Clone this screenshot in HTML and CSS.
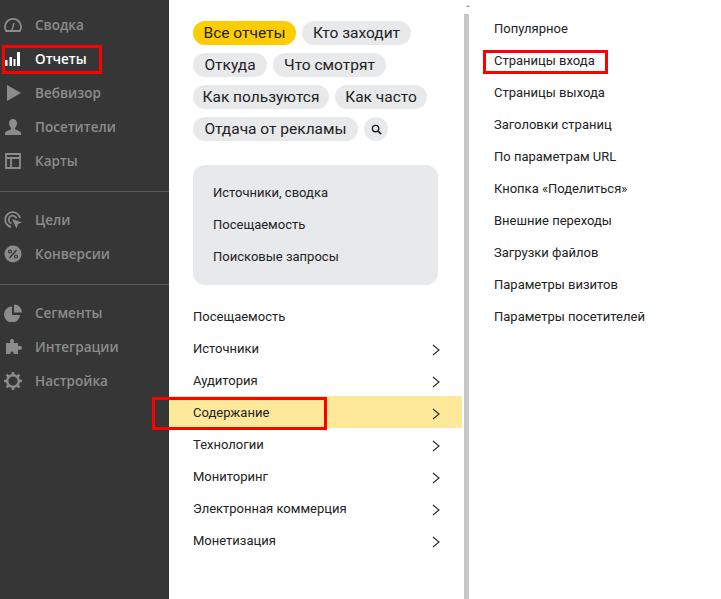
FILE: index.html
```html
<!DOCTYPE html>
<html lang="ru">
<head>
<meta charset="utf-8">
<title>Отчеты</title>
<link rel="stylesheet" href="styles.css">
</head>
<body>
<div class="app">
  <nav class="side">
    <div class="side-group">
      <a class="side-item"><svg class="ico" viewBox="0 0 18 18"><path d="M2.200 15a8 8 0 1 1 13.600 0z" fill="none" stroke="#8c8c8c" stroke-width="1.800"/><path d="M8 14l2-7" stroke="#8c8c8c" stroke-width="1.400"/></svg><span>Сводка</span></a>
      <a class="side-item active"><svg class="ico" viewBox="0 0 18 18"><path d="M1 10h2.500v6H1zM5.500 7H8v9H5.500zM9.500 9h2v7h-2zM13 2h3v14h-3z" fill="#fff"/></svg><span>Отчеты</span></a>
      <a class="side-item"><svg class="ico" viewBox="0 0 18 18"><path d="M3 1l14 8-14 8z" fill="#8c8c8c"/></svg><span>Вебвизор</span></a>
      <a class="side-item"><svg class="ico" viewBox="0 0 18 18"><path d="M9 1c2.500 0 4 2 4 4.500 0 2-1 3.500-2 4.300v1.400l5 2.300c1 .5 1 1.500 1 3.500H1c0-2 0-3 1-3.500l5-2.300V9.800C6 9 5 7.500 5 5.500 5 3 6.500 1 9 1z" fill="#8c8c8c"/></svg><span>Посетители</span></a>
      <a class="side-item"><svg class="ico" viewBox="0 0 18 18"><path d="M2 2h14v14H2zM2 6h14M7 6v10" fill="none" stroke="#8c8c8c" stroke-width="1.800"/></svg><span>Карты</span></a>
    </div>
    <div class="side-group">
      <a class="side-item"><svg class="ico" viewBox="0 0 18 18"><path d="M7 16A7.500 7.500 0 1 1 16 7M7.500 12.500A4 4 0 1 1 12.500 7.500" fill="none" stroke="#8c8c8c" stroke-width="1.800"/><path d="M8 8l10 3.500-4 1.500-1.500 4.500z" fill="#8c8c8c"/></svg><span>Цели</span></a>
      <a class="side-item"><svg class="ico" viewBox="0 0 18 18"><circle cx="9" cy="9" r="8.500" fill="#8c8c8c"/><path d="M12.500 5l-7 8" stroke="#363636" stroke-width="1.500"/><circle cx="6" cy="6.500" r="1.500" fill="none" stroke="#363636" stroke-width="1.200"/><circle cx="12" cy="11.500" r="1.500" fill="none" stroke="#363636" stroke-width="1.200"/></svg><span>Конверсии</span></a>
    </div>
    <div class="side-group">
      <a class="side-item"><svg class="ico" viewBox="0 0 18 18"><path d="M8 2.500a8 8 0 1 0 8 8.500H8z" fill="#8c8c8c"/><path d="M10 .5a8 8 0 0 1 8 8h-8z" fill="#8c8c8c"/></svg><span>Сегменты</span></a>
      <a class="side-item"><svg class="ico" viewBox="0 0 18 18"><path d="M2 5h4.500C5.500 3.500 6 1 8 1s2.500 2.500 1.500 4H14v3.500c1.500-1 4-.5 4 1.500s-2.500 2.500-4 1.500V16H9.500c.5-1.500-.5-2.500-1.500-2.500S6 14.500 6.500 16H2z" fill="#8c8c8c"/></svg><span>Интеграции</span></a>
      <a class="side-item"><svg class="ico" viewBox="0 0 18 18"><circle cx="9" cy="9" r="5.800" fill="none" stroke="#8c8c8c" stroke-width="2.400"/><path d="M9 0v3M9 15v3M0 9h3M15 9h3M2.600 2.600l2.200 2.200M13.200 13.200l2.200 2.200M15.400 2.600l-2.200 2.200M4.800 13.200l-2.200 2.200" stroke="#8c8c8c" stroke-width="2.600"/></svg><span>Настройка</span></a>
    </div>
  </nav>

  <main class="reports">
    <div class="chips">
      <span class="chip chip-on chip-all">Все отчеты</span>
      <span class="chip chip-who">Кто заходит</span>
      <span class="chip chip-from">Откуда</span>
      <span class="chip chip-what">Что смотрят</span>
      <span class="chip chip-how">Как пользуются</span>
      <span class="chip chip-often">Как часто</span>
      <span class="chip chip-ads">Отдача от рекламы</span>
      <span class="chip chip-search"><svg class="search" viewBox="0 0 12 12"><circle cx="5" cy="5" r="3.500" fill="none" stroke="#222" stroke-width="1.500"/><path d="M7.500 7.500L11 11" stroke="#222" stroke-width="1.800"/></svg></span>
    </div>
    <div class="card">
      <a class="row">Источники, сводка</a>
      <a class="row">Посещаемость</a>
      <a class="row">Поисковые запросы</a>
    </div>
    <div class="menu">
      <a class="row menu-row">Посещаемость</a>
      <a class="row menu-row">Источники<svg class="chev" viewBox="0 0 8 12"><path d="M1 1l6 5-6 5" fill="none" stroke="#333" stroke-width="1.200"/></svg></a>
      <a class="row menu-row">Аудитория<svg class="chev" viewBox="0 0 8 12"><path d="M1 1l6 5-6 5" fill="none" stroke="#333" stroke-width="1.200"/></svg></a>
      <a class="row menu-row selected">Содержание<svg class="chev" viewBox="0 0 8 12"><path d="M1 1l6 5-6 5" fill="none" stroke="#333" stroke-width="1.200"/></svg></a>
      <a class="row menu-row">Технологии<svg class="chev" viewBox="0 0 8 12"><path d="M1 1l6 5-6 5" fill="none" stroke="#333" stroke-width="1.200"/></svg></a>
      <a class="row menu-row">Мониторинг<svg class="chev" viewBox="0 0 8 12"><path d="M1 1l6 5-6 5" fill="none" stroke="#333" stroke-width="1.200"/></svg></a>
      <a class="row menu-row">Электронная коммерция<svg class="chev" viewBox="0 0 8 12"><path d="M1 1l6 5-6 5" fill="none" stroke="#333" stroke-width="1.200"/></svg></a>
      <a class="row menu-row">Монетизация<svg class="chev" viewBox="0 0 8 12"><path d="M1 1l6 5-6 5" fill="none" stroke="#333" stroke-width="1.200"/></svg></a>
    </div>
  </main>

  <div class="scroll"><span class="scroll-arrow"></span><span class="scroll-thumb"></span></div>

  <aside class="sub">
    <a class="row">Популярное</a>
    <a class="row">Страницы входа</a>
    <a class="row">Страницы выхода</a>
    <a class="row">Заголовки страниц</a>
    <a class="row">По параметрам URL</a>
    <a class="row">Кнопка «Поделиться»</a>
    <a class="row">Внешние переходы</a>
    <a class="row">Загрузки файлов</a>
    <a class="row">Параметры визитов</a>
    <a class="row">Параметры посетителей</a>
  </aside>

  <div class="mark mark-reports"></div>
  <div class="mark mark-content"></div>
  <div class="mark mark-entry"></div>
</div>
</body>
</html>
```

FILE: styles.css
```css
* { box-sizing: border-box; }
html, body { margin: 0; height: 100%; overflow: hidden; }
body { background: #fff; color: #222; font-family: Roboto, "Noto Sans", sans-serif; }
.app { position: relative; display: flex; width: 721px; height: 599px; }

.side { flex: 0 0 169px; background: #363636; padding-top: 8px; font-family: "Open Sans", sans-serif; }
.side-group { padding-bottom: 13px; margin-bottom: 11px; border-bottom: 1px solid #5a5a5a; }
.side-group:last-child { border-bottom: 0; }
.side-item { display: flex; align-items: center; height: 34px; padding-left: 4px; color: #8c8c8c; font-size: 13.500px; font-weight: 600; }
.side-item span { margin-left: 13px; }
.side-item.active { color: #fff; }
.ico { width: 18px; height: 18px; flex: none; }

.reports { flex: 0 0 293px; padding-top: 21px; }
.chips { display: flex; flex-wrap: wrap; gap: 8px 6px; padding: 0 22px 0 24px; }
.chip { height: 24px; line-height: 24px; border-radius: 12px; background: #e8e9ea; font-size: 15.500px; text-align: center; white-space: nowrap; }
.chip-on { background: #fc0; }
.chip-all { width: 103px; }
.chip-who { width: 109px; }
.chip-from { width: 74px; }
.chip-what { width: 113px; }
.chip-how { width: 136px; }
.chip-often { width: 92px; }
.chip-ads { width: 165px; }
.chip-search { display: flex; align-items: center; justify-content: center; width: 24px; }
.search { width: 11px; height: 11px; }

.row { display: flex; align-items: center; justify-content: space-between; height: 32px; font-size: 13px; white-space: nowrap; }
.card { width: 245px; height: 120px; margin: 24px 0 0 24px; padding: 11px 20px; border-radius: 12px; background: #e8e9ea; }
.menu { margin-top: 15px; }
.menu-row { padding: 0 22px 0 24px; }
.selected { background: #fee99b; }
.chev { width: 8px; height: 12px; margin-top: 3px; }

.scroll { position: relative; flex: 0 0 32px; }
.scroll-arrow { position: absolute; top: 5px; left: 4px; border: 2px solid transparent; border-bottom-color: #999; border-top: 0; }
.scroll-thumb { position: absolute; top: 14px; bottom: 0; left: 2px; width: 5px; background: #c8c8c8; }

.sub { flex: 1; padding-top: 12px; }

.mark { position: absolute; border: 3px solid #f00; }
.mark-reports { left: 2px; top: 45px; width: 100px; height: 29px; }
.mark-content { left: 152px; top: 397px; width: 175px; height: 33px; }
.mark-entry { left: 483px; top: 50px; width: 125px; height: 24px; }
```
